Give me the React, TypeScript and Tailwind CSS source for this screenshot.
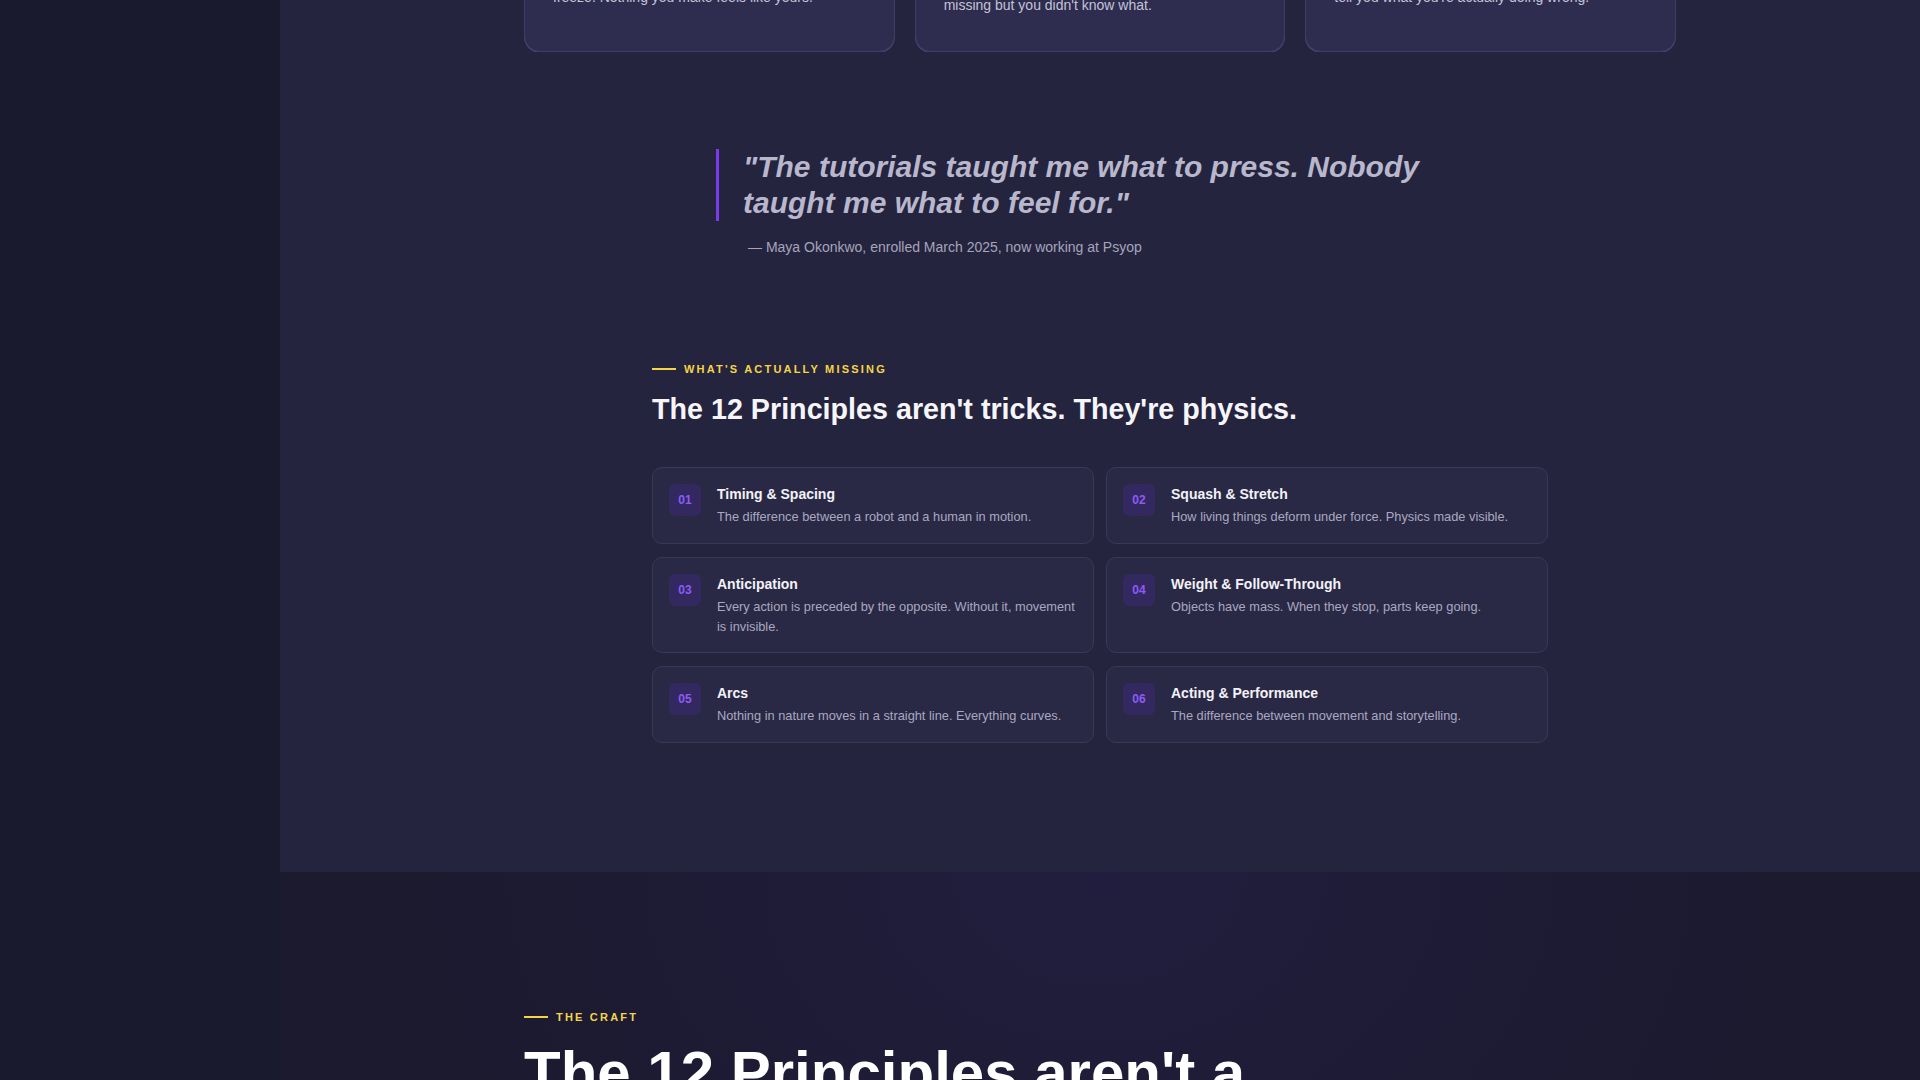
import React from "react";

type Problem = {
  title: string;
  text: string;
};

type Principle = {
  num: string;
  title: string;
  text: string;
};

const problems: Problem[] = [
  {
    title: "Blank-page paralysis",
    text: "You know every tool and shortcut in the software. The moment you open a blank scene, though, you freeze. Nothing you make feels like yours.",
  },
  {
    title: "Your work looks stiff and you can't say why",
    text: "Every tutorial left you sensing that something was missing but you didn't know what.",
  },
  {
    title: "Feedback goes nowhere",
    text: "Friends say it looks cool. Your family loves it. Forums say it's fine. Not one person sits down to tell you what you're actually doing wrong.",
  },
];

const principles: Principle[] = [
  {
    num: "01",
    title: "Timing & Spacing",
    text: "The difference between a robot and a human in motion.",
  },
  {
    num: "02",
    title: "Squash & Stretch",
    text: "How living things deform under force. Physics made visible.",
  },
  {
    num: "03",
    title: "Anticipation",
    text: "Every action is preceded by the opposite. Without it, movement is invisible.",
  },
  {
    num: "04",
    title: "Weight & Follow-Through",
    text: "Objects have mass. When they stop, parts keep going.",
  },
  {
    num: "05",
    title: "Arcs",
    text: "Nothing in nature moves in a straight line. Everything curves.",
  },
  {
    num: "06",
    title: "Acting & Performance",
    text: "The difference between movement and storytelling.",
  },
];

const Eyebrow = ({ children }: { children: React.ReactNode }) => (
  <div className="flex items-center gap-2">
    <span className="h-[2px] w-6 bg-[#f5d547]" />
    <span className="text-[11px] font-bold uppercase leading-4 tracking-[0.2em] text-[#f5d547]">
      {children}
    </span>
  </div>
);

const ProblemCard = ({ problem }: { problem: Problem }) => (
  <div className="rounded-2xl border border-[#3e3d63] bg-[#2e2d50] px-7 pt-7 pb-[34px] shadow-[0_1px_0_#46456c]">
    <h3 className="text-xl font-bold leading-8 text-[#f1f0f7]">
      {problem.title}
    </h3>
    <p className="mt-2 text-sm leading-6 text-[#c4c3d6]">{problem.text}</p>
  </div>
);

const PrincipleCard = ({ item }: { item: Principle }) => (
  <div className="flex gap-4 rounded-[10px] border border-[#393857] bg-[#2a2945] p-4">
    <div className="flex h-8 w-8 shrink-0 items-center justify-center rounded-md bg-[#33285f] text-xs font-bold text-[#8b5cf6]">
      {item.num}
    </div>
    <div className="min-w-0">
      <h4 className="text-sm font-bold leading-5 text-[#f3f2f8]">
        {item.title}
      </h4>
      <p className="mt-[3px] text-[12.8px] leading-[1.55] text-[#a9a8c0]">
        {item.text}
      </p>
    </div>
  </div>
);

export default function App() {
  return (
    <div className="flex h-[1080px] overflow-hidden bg-[#1a1a2e] font-['Liberation_Sans',Arial,sans-serif] antialiased">
      <aside className="w-[280px] shrink-0 bg-[#1a1a2e]" />

      <main className="min-w-0 flex-1">
        <section className="bg-[#25243f] px-12 pb-[129px]">
          <div className="mx-auto flex h-[52px] max-w-6xl flex-col justify-end overflow-hidden">
            <div className="grid grid-cols-3 items-stretch gap-5">
              {problems.map((p) => (
                <ProblemCard key={p.title} problem={p} />
              ))}
            </div>
          </div>

          <figure className="mx-auto mt-[97px] max-w-3xl">
            <blockquote className="border-l-[3px] border-[#7c3aed] pl-6 text-[30px] font-bold italic leading-[1.2] text-[#b8b7cc]">
              "The tutorials taught me what to press. Nobody taught me what to
              feel for."
            </blockquote>
            <figcaption className="mt-4 pl-8 text-sm leading-5 text-[#a6a5bb]">
              — Maya Okonkwo, enrolled March 2025, now working at Psyop
            </figcaption>
          </figure>

          <div className="mx-auto mt-[104px] max-w-4xl">
            <Eyebrow>What's actually missing</Eyebrow>
            <h2 className="mt-[14px] text-[28.7px] font-bold leading-9 text-[#f6f5fa]">
              The 12 Principles aren't tricks. They're physics.
            </h2>
            <div className="mt-10 grid grid-cols-2 gap-x-3 gap-y-[13px]">
              {principles.map((item) => (
                <PrincipleCard key={item.num} item={item} />
              ))}
            </div>
          </div>
        </section>

        <section className="bg-[#1b1a2f] bg-[radial-gradient(ellipse_55%_140%_at_50%_0%,rgba(78,52,165,0.13),transparent_75%)] px-12 pt-[137px] pb-32">
          <div className="mx-auto max-w-6xl">
            <Eyebrow>The craft</Eyebrow>
            <h2 className="mt-[15px] max-w-3xl text-6xl font-bold leading-[1.1] text-white">
              The 12 Principles aren't a checklist. They're a language.
            </h2>
          </div>
        </section>
      </main>
    </div>
  );
}
